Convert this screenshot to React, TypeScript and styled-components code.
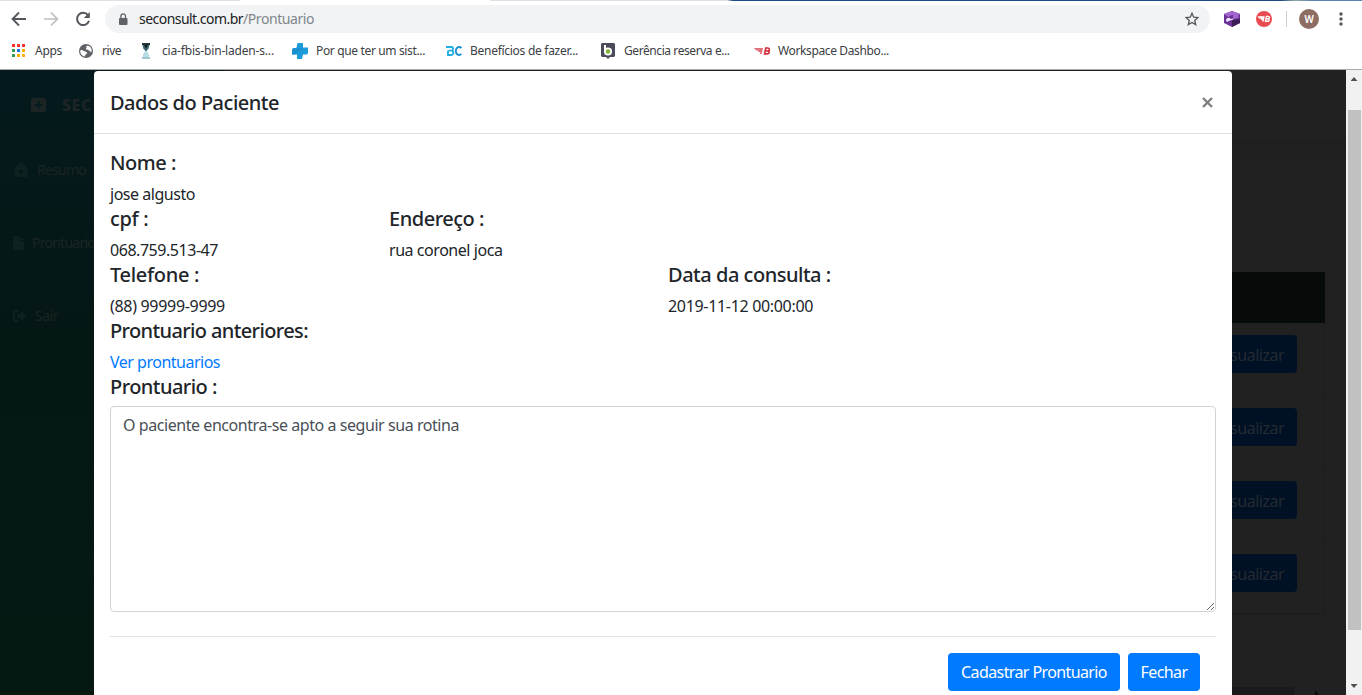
import React from 'react';
import styled, { createGlobalStyle } from 'styled-components';

const Global = createGlobalStyle`
  * { box-sizing: border-box; }
  body { margin: 0; overflow: hidden; background: #fff; }
  body, button, textarea { font-family: "Noto Sans", "Open Sans", sans-serif; }
  h5, p { margin: 0; }
`;

const Browser = styled.div`
  display: flex; flex-direction: column; width: 1362px; height: 695px; overflow: hidden;
`;
const Chrome = styled.header`
  height: 70px; flex: none; background: #fff; border-bottom: 1px solid #a9a9a9;
`;
const TabEdge = styled.div`
  height: 1px; background: linear-gradient(90deg, #dee1e6 0 240px, #fff 240px 490px, #dee1e6 490px 727px, #1c4a86 733px 1280px, #8fa9a9 1295px, #5d82b4 1312px);
`;
const Toolbar = styled.div`
  display: flex; align-items: center; height: 36px; padding-left: 10px;
`;
const NavIcon = styled.svg`
  width: 18px; height: 18px; margin-right: 14px; flex: none;
`;
const AddressBar = styled.div`
  display: flex; align-items: center; width: 1105px; height: 28px; margin: 0 13px 0 -1px; padding: 0 11px 0 13px;
  border-radius: 14px; background: #f1f3f4;
`;
const Url = styled.div`
  flex: 1; margin-left: 11px; font-size: 14px; letter-spacing: -0.54px; color: #202124; line-height: 20px;
`;
const UrlPath = styled.span`color: #80868b; letter-spacing: -0.43px;`;
const Divider = styled.i`width: 1px; height: 16px; margin: 0 12px 0 14px; background: #cdcfd2;`;
const Avatar = styled.span`
  display: grid; place-items: center; width: 20px; height: 20px; margin-right: 19px; border-radius: 50%;
  background: #8d6e63; color: #fff; font: 500 11px Roboto, sans-serif;
`;
const Bookmarks = styled.nav`display: flex; align-items: center; height: 28px; padding-left: 11px;`;
const Bookmark = styled.div<{ $w: number; $gap: number; $track: number }>`
  display: flex; align-items: center; gap: ${p => p.$gap}px; width: ${p => p.$w}px; flex: none;
  font-size: 12px; line-height: 16px; letter-spacing: ${p => p.$track}px; color: #3c4043; white-space: nowrap;
  svg { flex: none; }
`;

const Viewport = styled.div`position: relative; display: flex; flex: 1; min-height: 0;`;
const Sidebar = styled.aside`
  width: 224px; flex: none; padding: 13px 13px 0; font-size: 14px; color: #1b2423;
  background: linear-gradient(180deg, #051a1d 0, #051715 260px, #051816 440px, #051911 625px);
`;
const Brand = styled.div`
  display: flex; align-items: center; height: 44px; padding-left: 18px; gap: 16px; font-size: 16px; font-weight: 800;
  letter-spacing: 0.5px; color: #1c2524;
`;
const MenuItem = styled.div<{ $gap: number; $track: number }>`
  display: flex; align-items: center; gap: ${p => p.$gap}px; height: 73px; padding-bottom: 16px; letter-spacing: ${p => p.$track}px;
  svg { flex: none; }
`;
const MenuList = styled.div`border-top: 1px solid #081c1e; margin-top: 13px;`;
const Content = styled.main`flex: 1; background: #212121; overflow: hidden;`;
const TopBar = styled.div`height: 70px; background: #212121; box-shadow: 0 3px 14px #1e1e1e;`;
const Table = styled.div`width: 1055px; height: 343px; margin: 132px 0 0 46px; border: 1px solid #1e1e1e;`;
const TableHead = styled.div`height: 51px; margin: -1px; background: #060a09;`;
const TableRow = styled.div`
  display: flex; justify-content: flex-end; height: 73px; padding: 13px 27px 0 0; border-bottom: 1px solid #1e1e1e;
`;
const DimButton = styled.button`
  width: 96px; height: 38px; padding: 1px 13px 0 0; border: 0; border-radius: 4px; background: #001125; color: #242a30;
  font-size: 16px; letter-spacing: -0.5px; text-align: right;
`;
const PageFooter = styled.div`
  display: flex; gap: 21px; height: 20px; margin-top: 72px;
`;
const FooterBar = styled.div`width: 1070px; flex: none; background: #1a1a1a;`;

const Scrollbar = styled.div`
  display: flex; flex-direction: column; align-items: center; justify-content: space-between; width: 16px;
  flex: none; background: #f1f1f1; padding: 7px 0;
`;
const Thumb = styled.div`width: 13px; height: 520px; margin: 29px 0 auto 1px; background: #c1c1c1;`;
const Arrow = styled.i<{ $down?: boolean }>`
  width: 7px; height: 4px; background: #505050;
  clip-path: ${p => (p.$down ? 'polygon(0 0, 100% 0, 50% 100%)' : 'polygon(0 100%, 100% 100%, 50% 0)')};
`;

const Modal = styled.section`
  position: absolute; left: 94px; top: 1px; width: 1138px; height: 640px; background: #fff; color: #212529;
  border-radius: 4px 4px 0 0;
`;
const ModalHeader = styled.div`
  display: flex; justify-content: space-between; align-items: flex-start; height: 63px; padding: 16px; border-bottom: 1px solid #dee2e6;
`;
const Heading = styled.h5<{ $track?: number }>`
  margin-bottom: -2px; font-size: 20px; line-height: 26px; font-weight: 500; letter-spacing: ${p => p.$track ?? -0.48}px; white-space: nowrap;
`;
const ModalTitle = styled(Heading)`line-height: 32px; letter-spacing: -0.5px;`;
const Close = styled.svg`width: 11px; height: 11px; margin: 10px 3px 0 0;`;
const ModalBody = styled.div`padding: 16px 16px 0;`;
const FieldRow = styled.div`display: grid; grid-template-columns: repeat(4, 279px); height: 56px;`;
const Field = styled.div<{ $col?: number }>`grid-column: ${p => p.$col ?? 1};`;
const Value = styled.p<{ $track: number }>`
  margin-top: 8px; font-size: 16px; line-height: 24px; letter-spacing: ${p => p.$track}px; white-space: nowrap;
`;
const Link = styled.a`color: #007bff;`;
const Notes = styled.textarea`
  display: block; width: 1106px; height: 206px; margin-top: 10px; padding: 6px 12px; border: 1px solid #ced4da; border-radius: 4px;
  font-size: 16px; line-height: 24px; letter-spacing: -0.44px; color: #495057; outline: 0; resize: vertical;
`;
const NotesHeading = styled(Heading)`margin-bottom: 0; height: 24px;`;
const NotesArea = styled(Notes)`margin-top: 8px;`;
const Actions = styled.div`
  display: flex; justify-content: flex-end; gap: 8px; margin-top: 24px; padding: 16px; border-top: 1px solid #e0e3e6;
`;
const Button = styled.button<{ $w: number }>`
  width: ${p => p.$w}px; height: 38px; padding: 0; border: 0; border-radius: 4px; background: #007bff; color: #fff;
  font-size: 16px; letter-spacing: -0.61px; line-height: 24px;
`;

const APP_FILL = ['#f0352b', '#f0352b', '#f0352b', '#2f9e4f', '#1a73e8', '#fbb000', '#2f9e4f', '#fbb000', '#fbb000'];

const icons = {
  apps: (
    <svg width="14" height="14">
      {APP_FILL.map((fill, i) => (
        <rect key={i} x={1 + (i % 3) * 5} y={Math.floor(i / 3) * 5} width="3" height="3" fill={fill} />
      ))}
    </svg>
  ),
  globe: (
    <svg width="14" height="14" viewBox="0 0 14 14">
      <circle cx="7" cy="7" r="7" fill="#5f6368" />
      <path d="M1.2 7.2C2 5 3.500 6.700 5 7c1.500.2 1.500 1 2.700 1.300 1 .3.3 1.700-.7 2-1 .4-.8 1.500-1 2.300C3 12 1.400 10 1.200 7.200ZM7 2.200c1.700-1.300 4 0 5 1.600.7 1.200.8 2.500.6 3.700-1 .7-2.200-.2-2.600-1C9.500 5.400 8.200 6 7.300 5.500 6 5 8.600 3.800 7 2.200Z" fill="#fff" />
    </svg>
  ),
  hourglass: (
    <svg width="10" height="16" viewBox="0 0 10 16">
      <path d="M1 0h8v2H1z" fill="#26343a" />
      <path d="M1.500 2h7L7.600 5.500 5.600 8h-1.200L2.300 5.500Z" fill="#3f6b73" />
      <path d="M3 2h4L5 6Z" fill="#142025" />
      <path d="M4.400 8h1.200L8 11v3H2v-3Z" fill="#b9dde5" />
      <path d="M1 14h8v2H1z" fill="#9cc6d0" />
    </svg>
  ),
  cross: (
    <svg width="16" height="16" viewBox="0 0 16 16">
      <path d="M5.500 0H11v4.500h5V10l-1 1.500h-4L10 16H5v-4.500H0V6.500L1 5h3.500Z" fill="#1e9bd9" />
      <path d="m4 11.500 7-6.500H5.500V1L4.500 5 0 6.500v5Z" fill="#1589c9" opacity=".55" />
    </svg>
  ),
  bc: (
    <svg width="16" height="16" viewBox="0 0 16 16" fill="none" strokeWidth="1.9">
      <path d="M0 4h5.500c2 0 2 3.600 0 3.600H2.500M5.500 7.600c2.400 0 2.400 4.400 0 4.400H2V7.500" stroke="#22aee0" />
      <path d="M15.500 5C13 3 9.800 4.500 9.800 8s3.200 5 5.700 3" stroke="#1a8fd0" />
    </svg>
  ),
  shield: (
    <svg width="14" height="16" viewBox="0 0 14 16">
      <path d="M1 0h12l1 1v12l-1 1H9l-2 2-2-2H1l-1-1V1Z" fill="#4a4c5c" />
      <path d="M4 2v6" stroke="#fff" strokeWidth="2" />
      <circle cx="7" cy="8.500" r="3.200" fill="#83b735" stroke="#fff" strokeWidth="1.800" />
    </svg>
  ),
  wing: (
    <svg width="17" height="16" viewBox="0 0 17 16">
      <path d="M0 5h9l-1.300 6H6l.4-2H4l.3-1.500H2Z" fill="#e0737b" />
      <path d="m11.800 5-1.200 5.800h2.600c2.300 0 2.500-2.400 1-2.900 1.700-.4 1.700-2.900-.6-2.900ZM11.300 8h2.500" fill="none" stroke="#d32f3f" strokeWidth="1.700" />
    </svg>
  ),
};

const bookmarks = [
  { icon: icons.apps, label: 'Apps', w: 68, gap: 10, track: -0.29 },
  { icon: icons.globe, label: 'rive', w: 62, gap: 9, track: -0.45 },
  { icon: icons.hourglass, label: 'cia-fbis-bin-laden-s...', w: 151, gap: 11, track: -0.18 },
  { icon: icons.cross, label: 'Por que ter um sist...', w: 154, gap: 8, track: -0.35 },
  { icon: icons.bc, label: 'Benefícios de fazer...', w: 155, gap: 8, track: -0.28 },
  { icon: icons.shield, label: 'Gerência reserva e...', w: 153, gap: 9, track: -0.42 },
  { icon: icons.wing, label: 'Workspace Dashbo...', w: 150, gap: 7, track: -0.37 },
];

export default function App() {
  return (
    <Browser>
      <Global />
      <Chrome>
        <TabEdge />
        <Toolbar>
          <NavIcon viewBox="0 0 18 18" fill="none" stroke="#54585d" strokeWidth="1.9"><path d="M16 9H3M9 2.500 2.600 9 9 15.500" /></NavIcon>
          <NavIcon viewBox="0 0 18 18" fill="none" stroke="#bcbec1" strokeWidth="1.700"><path d="M2 9h13M9 2.500 15.400 9 9 15.500" /></NavIcon>
          <NavIcon viewBox="0 0 18 18"><path d="M14 5.200A6.100 6.100 0 1 0 15 10.700" fill="none" stroke="#54585d" strokeWidth="2" /><path d="M15.800 2v6H9.800Z" fill="#54585d" /></NavIcon>
          <AddressBar>
            <svg width="10" height="13" viewBox="0 0 10 13"><rect x="1" y="5" width="8.500" height="7" rx="1" fill="#5f6368" /><path d="M2.900 5V3.200a2.300 2.300 0 0 1 4.600 0V5" fill="none" stroke="#5f6368" strokeWidth="1.300" /></svg>
            <Url>seconsult.com.br<UrlPath>/Prontuario</UrlPath></Url>
            <svg width="14" height="14" viewBox="0 0 14 14"><path d="m7 1.200 1.700 4 4.200.4-3.200 2.800 1 4.200L7 10.400l-3.700 2.200 1-4.200L1.100 5.600l4.200-.4Z" fill="none" stroke="#54585d" strokeWidth="1.300" /></svg>
          </AddressBar>
          <svg width="18" height="16" viewBox="0 0 18 16">
            <path d="M9 0 17 3v9l-8 4-8-4V3Z" fill="#6b3296" />
            <path d="m1 3 8-3 8 3-4 2-4-1-4 2Z" fill="#a565cf" />
            <path d="M9 9 17 8v4l-8 4Z" fill="#3d1d58" />
            <path d="M3 9.500c0-2 2-3 3.500-2.500L8 8l2-.5.5 1L7 9.500 4 11Z" fill="#f1e2fb" />
            <path d="M10 4h5.500v3L10 8Z" fill="#a565cf" />
          </svg>
          <svg width="31" height="16" viewBox="0 0 31 16">
            <circle cx="23" cy="8" r="8" fill="#e84c51" />
            <path fill="#fff" d="M16.500 5.300h7.200L22.800 10.600h-1.700l.4-1.800h-1.900l.3-1.200h-1.800Z" />
            <path d="m25.400 5.400-.9 4.900h2c2 0 2.200-2 .9-2.400 1.400-.3 1.500-2.500-.5-2.500ZM25 7.800h2.400" fill="none" stroke="#fff" strokeWidth="1.400" />
          </svg>
          <Divider />
          <Avatar>W</Avatar>
          <svg width="6" height="14" fill="#54585d"><circle cx="3" cy="2" r="1.700" /><circle cx="3" cy="7" r="1.700" /><circle cx="3" cy="12" r="1.700" /></svg>
        </Toolbar>
        <Bookmarks>
          {bookmarks.map(b => (
            <Bookmark key={b.label} $w={b.w} $gap={b.gap} $track={b.track}>{b.icon}{b.label}</Bookmark>
          ))}
        </Bookmarks>
      </Chrome>
      <Viewport>
        <Sidebar>
          <Brand>
            <svg width="15" height="14" viewBox="0 0 15 14"><rect width="15" height="14" rx="2" fill="#1c2524" /><path d="M7.500 3v8M3.500 7h8" stroke="#051a1c" strokeWidth="2" /></svg>
            SEC
          </Brand>
          <MenuList>
            <MenuItem $gap={8} $track={-0.75}>
              <svg width="16" height="15" viewBox="0 0 16 15" fill="#0e201f"><path d="M0 8 8 0l8 8-1 1-1-1v7H2V8L1 9Z" /><path d="M8 7v5M5.500 9.500h5" stroke="#051816" strokeWidth="1.500" /></svg>
              Resumo
            </MenuItem>
            <MenuItem $gap={8} $track={-0.75}>
              <svg width="11" height="14" viewBox="0 0 11 14" fill="#0e201f"><path d="M0 0h6v5h5v9H0ZM7 0l4 4H7Z" /></svg>
              Prontuario
            </MenuItem>
            <MenuItem $gap={8} $track={-0.5}>
              <svg width="14" height="12" viewBox="0 0 14 12" fill="#0e201f"><path d="M5 0H2Q0 0 0 2v8q0 2 2 2h3v-2H2V2h3ZM8 1l6 5-6 5V8H4V4h4Z" /></svg>
              Sair
            </MenuItem>
          </MenuList>
        </Sidebar>
        <Content>
          <TopBar />
          <Table>
            <TableHead />
            {[0, 1, 2, 3].map(i => (
              <TableRow key={i}><DimButton>Visualizar</DimButton></TableRow>
            ))}
          </Table>
          <PageFooter>
            <FooterBar />
            <svg width="8" height="20" viewBox="0 0 8 20"><path d="M0 3v12l3-3h4Z" fill="#0c0c0c" /></svg>
          </PageFooter>
        </Content>
        <Scrollbar><Arrow /><Thumb /><Arrow $down /></Scrollbar>
        <Modal>
          <ModalHeader>
            <ModalTitle>Dados do Paciente</ModalTitle>
            <Close viewBox="0 0 11 11"><path d="m1 1 9 9M10 1 1 10" stroke="#7f7f7f" strokeWidth="2.400" /></Close>
          </ModalHeader>
          <ModalBody>
            <FieldRow>
              <Field><Heading>Nome :</Heading><Value $track={-0.47}>jose algusto</Value></Field>
            </FieldRow>
            <FieldRow>
              <Field><Heading $track={-0.3}>cpf :</Heading><Value $track={-0.46}>068.759.513-47</Value></Field>
              <Field $col={2}><Heading>Endereço :</Heading><Value $track={-0.45}>rua coronel joca</Value></Field>
            </FieldRow>
            <FieldRow>
              <Field><Heading $track={-0.3}>Telefone :</Heading><Value $track={-0.31}>(88) 99999-9999</Value></Field>
              <Field $col={3}><Heading>Data da consulta :</Heading><Value $track={-0.32}>2019-11-12 00:00:00</Value></Field>
            </FieldRow>
            <FieldRow>
              <Field><Heading $track={-0.63}>Prontuario anteriores:</Heading><Value $track={-0.5}><Link>Ver prontuarios</Link></Value></Field>
            </FieldRow>
            <NotesHeading $track={-0.55}>Prontuario :</NotesHeading>
            <NotesArea defaultValue="O paciente encontra-se apto a seguir sua rotina" />
            <Actions>
              <Button $w={172}>Cadastrar Prontuario</Button>
              <Button $w={72}>Fechar</Button>
            </Actions>
          </ModalBody>
        </Modal>
      </Viewport>
    </Browser>
  );
}
